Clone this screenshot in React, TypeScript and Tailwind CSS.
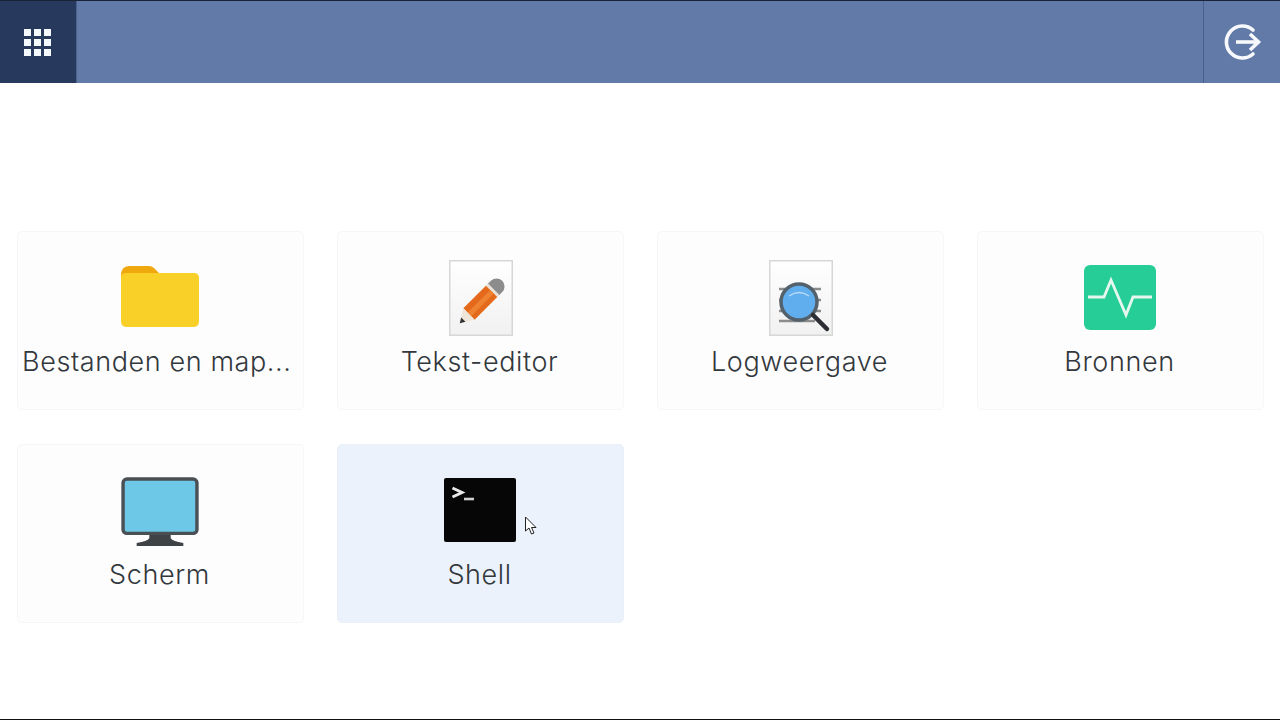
import React from "react";

function Folder() {
  return (
    <svg width="80" height="64" viewBox="0 0 80 64">
      <path d="M1 12 Q1 2 9 2 H29 Q32 2 34 4 L40 10 H20 V30 H1 Z" fill="#f0a80f" />
      <path d="M1 14 Q1 9 6 9 H74 Q79 9 79 14 V57 Q79 63 73 63 H7 Q1 63 1 57 Z" fill="#f9d027" />
    </svg>
  );
}

function PageFrame({ children }: { children: React.ReactNode }) {
  return (
    <svg width="64" height="76" viewBox="0 0 64 76">
      <defs>
        <linearGradient id="pg" x1="0" y1="0" x2="0" y2="1">
          <stop offset="0" stopColor="#ffffff" />
          <stop offset="1" stopColor="#f1f1f1" />
        </linearGradient>
      </defs>
      <rect x="0.75" y="0.75" width="62.5" height="74.5" fill="url(#pg)" stroke="#d6d8d5" strokeWidth="1.5" />
      {children}
    </svg>
  );
}

function Pencil() {
  return (
    <PageFrame>
      <g transform="translate(0 2) rotate(45 32 40)">
        <path d="M24 18 a8 8 0 0 1 16 0 v5 h-16 Z" fill="#8c8c8c" />
        <rect x="24" y="22" width="16" height="3" fill="#e8e2d8" />
        <rect x="24" y="25" width="16" height="32" fill="#e4691a" />
        <rect x="30" y="25" width="5" height="32" fill="#ee8230" />
        <path d="M24 57 H40 L32 70 Z" fill="#efe6da" />
        <path d="M29 65 H35 L32 70 Z" fill="#333" />
      </g>
    </PageFrame>
  );
}

function LogSearch() {
  return (
    <PageFrame>
      <g stroke="#8a8d8b" strokeWidth="2.5">
        <line x1="10" y1="29" x2="52" y2="29" />
        <line x1="10" y1="40" x2="52" y2="40" />
        <line x1="10" y1="51" x2="52" y2="51" />
        <line x1="10" y1="61" x2="46" y2="61" />
      </g>
      <circle cx="30" cy="42" r="18" fill="#60aeee" stroke="#53616c" strokeWidth="3.5" />
      <path d="M20 36 Q30 29 40 36" fill="none" stroke="#b9dcf7" strokeWidth="1.5" />
      <line x1="44" y1="55" x2="58" y2="69" stroke="#2b2f33" strokeWidth="4.5" strokeLinecap="round" />
    </PageFrame>
  );
}

function Pulse() {
  return (
    <svg width="72" height="65" viewBox="0 0 72 65">
      <rect x="0" y="0" width="72" height="65" rx="6" fill="#26cd96" />
      <path d="M4 32 H20 L27 15 L42 50 L49 32 H68" fill="none" stroke="#e6f7ef" strokeWidth="2.8" />
    </svg>
  );
}

function Monitor() {
  return (
    <svg width="78" height="70" viewBox="0 0 80 72">
      <path d="M29 56 H51 V63 Q53 66 64 68 V71 H16 V68 Q27 66 29 63 Z" fill="#3f4346" />
      <rect x="2" y="2" width="76" height="56" rx="4" fill="#6dc7e6" stroke="#4a4f53" strokeWidth="3.5" />
    </svg>
  );
}

function Terminal() {
  return (
    <svg width="72" height="64" viewBox="0 0 72 64">
      <rect x="0" y="0" width="72" height="64" rx="2" fill="#060606" />
      <path d="M8.5 10 L18 14.5 L8.5 19" fill="none" stroke="#e8e8e8" strokeWidth="3" />
      <line x1="20" y1="21" x2="30" y2="21" stroke="#cfcfcf" strokeWidth="2.6" />
    </svg>
  );
}

function Card({
  label,
  icon,
  active,
  iconClass,
  labelClass,
}: {
  label: string;
  icon: React.ReactNode;
  active?: boolean;
  iconClass: string;
  labelClass?: string;
}) {
  return (
    <div
      className={`h-[179px] rounded-[5px] border flex flex-col items-center pl-[3px] pr-[5px] ${
        active ? "bg-[#ebf2fb] border-[#eaf0f8]" : "bg-[#fdfdfe] border-[#f6f6f6]"
      }`}
    >
      <div className={`h-[100px] flex items-start justify-center ${iconClass}`}>{icon}</div>
      <div
        className={`mt-[14px] w-full truncate text-[27px] leading-[32px] tracking-[0.6px] text-[#33383c] font-['Inter','Liberation_Sans',sans-serif] font-light ${
          labelClass ?? "text-center"
        }`}
      >
        {label}
      </div>
    </div>
  );
}

export default function App() {
  return (
    <div className="h-[720px] w-[1280px] bg-white flex flex-col overflow-hidden">
      <header className="h-[83px] shrink-0 bg-[#627aa8] border-t border-[#1b2436] flex">
        <div className="w-[77px] bg-[#27395d] border-r border-[#4b6291] flex items-center justify-center pr-[2px]">
          <div className="grid grid-cols-3 gap-[3px]">
            {Array.from({ length: 9 }).map((_, i) => (
              <div key={i} className="w-[7px] h-[7px] bg-[#f5faff]" />
            ))}
          </div>
        </div>
        <div className="flex-1" />
        <div className="w-[77px] border-l border-[#48608f] flex items-center justify-center pl-[2px]">
          <svg width="38" height="38" viewBox="0 0 38 38" fill="none" stroke="#f7f9fc" strokeWidth="3.6">
            <path d="M29 7 A16 16 0 1 0 29 31" strokeLinecap="round" />
            <path d="M12 19 H34" />
            <path d="M26 11 L34.5 19 L26 27" />
          </svg>
        </div>
      </header>
      <main className="flex-1 pt-[148px] pl-[17px] relative">
        <div className="grid grid-cols-[repeat(4,287px)] gap-x-[33px] gap-y-[34px]">
          <Card label="Bestanden en map..." icon={<Folder />} iconClass="pt-[32px]" labelClass="text-left pl-px" />
          <Card label="Tekst-editor" icon={<Pencil />} iconClass="pt-[28px] pl-[2px]" />
          <Card label="Logweergave" icon={<LogSearch />} iconClass="pt-[28px] pl-[2px]" />
          <Card label="Bronnen" icon={<Pulse />} iconClass="pt-[33px]" />
          <Card label="Scherm" icon={<Monitor />} iconClass="pt-[32px]" />
          <Card label="Shell" icon={<Terminal />} active iconClass="pt-[33px]" />
        </div>
        <svg className="absolute left-[524px] top-[433px]" width="14" height="20" viewBox="0 0 14 20">
          <path d="M1.5 1 V15 L5 12 L7.5 18 L10 17 L7.5 11.5 H12 Z" fill="#fff" stroke="#222" strokeWidth="1" />
        </svg>
      </main>
      <div className="h-px shrink-0 bg-[#111]" />
    </div>
  );
}
